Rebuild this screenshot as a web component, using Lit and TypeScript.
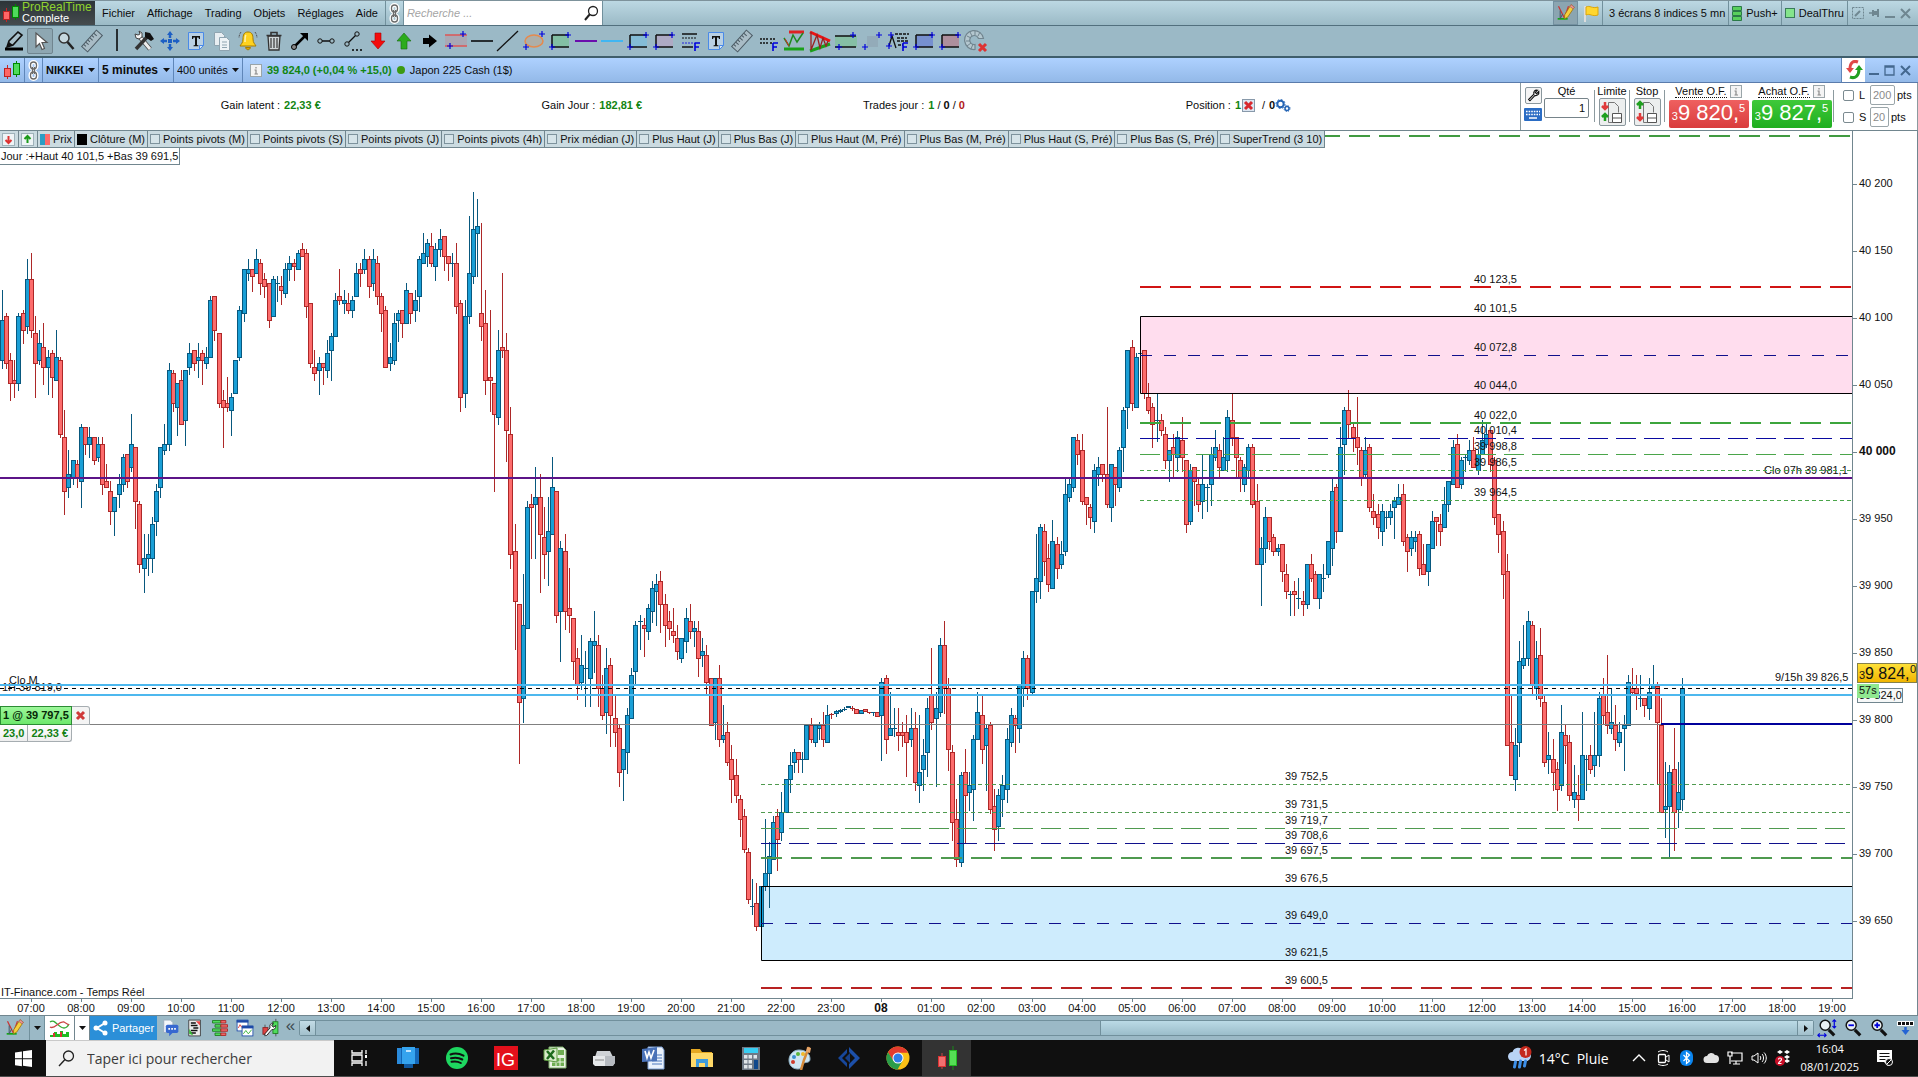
import { LitElement, html, svg, css, nothing } from "lit";
import { customElement } from "lit/decorators.js";

/* ---------- candle data ---------- */

interface Segment {
  x0: number;
  kx: number;
  y0: number;
  rows: string;
}

interface Candle {
  x: number;
  up: boolean;
  top: number;
  bottom: number;
  high: number;
  low: number;
}

// Each entry: position, direction (u/d), then body top, body bottom, high, low in thirds of a unit.
const SEGMENTS: Segment[] = [
  {
    x0: 0, kx: 2.45, y0: 160,
    rows: `5u481,601,390,624 15d469,610,459,624 25d601,670,580,722 37d661,670,601,713 47u469,670,459,692
57d460,511,450,551 67u358,499,297,521 77d358,511,279,531 87d520,610,468,713 98u550,601,510,612
109d562,622,490,672 118u592,622,571,702 128d580,653,571,713 138u592,661,510,661 148d601,823,591,833
160d832,994,751,1064 170u943,983,870,1013 180u902,952,902,974 189d913,952,901,983 199u802,964,792,1043
210d802,853,802,884 221u832,853,801,893 231d832,902,832,914 241u853,892,831,904 251d853,973,831,1003
260d964,983,913,983 270d994,1055,964,1094 282u1012,1054,1012,1125 293u973,1003,943,1043 302u892,973,882,994
312d883,964,883,983 321u853,922,762,933 332d862,1024,862,1104 344d1033,1213,1023,1236 354u1195,1225,1122,1296
364u1184,1195,1122,1245 373u1093,1195,1072,1236 383u994,1084,973,1125 395u862,983,862,1013 405u853,871,793,884
415u631,853,610,872 425d640,731,631,753 435u670,742,670,825 445d661,793,631,793 457u631,781,631,855
466u580,622,549,642 476d571,610,571,632 486u592,601,549,653 496d580,601,571,672 506u592,610,562,624
517u421,592,408,592 527d409,511,409,541 538d520,731,520,742 547d721,742,691,863 557d731,742,652,753
567u712,751,700,825 580u601,700,601,700 589u451,592,438,602 599u328,460,328,483 608u328,340,298,360
618d328,349,328,393 628u298,340,267,340 641d310,370,298,402 650d358,379,340,411 660d370,481,370,501
670u358,469,348,469 681u370,370,348,423 690d379,391,349,432 702u328,400,310,411 711u310,328,288,360
721d310,319,297,360 731u280,328,270,328 741d268,289,249,289 751d280,439,267,471 763d430,610,430,622
773d622,640,571,661 783u610,631,592,702 792d610,622,610,672 802u580,631,541,653 811u529,571,520,662
824u421,529,399,529 834d409,421,328,432 844u421,430,391,460 854d430,451,400,460 863u421,451,409,471
873u340,409,310,409 885d328,340,310,379 895u298,328,267,340 905d298,379,289,411 915u298,370,267,392
925d310,409,289,432 935d409,460,400,513 947d451,622,439,622 956u592,610,549,632 966u490,601,460,613
976u460,481,450,544 986d451,490,451,531 995u391,490,370,490 1008d400,460,400,490 1018u421,451,391,483
1028u298,409,289,453 1037u280,310,219,310 1047u249,289,238,319 1057d259,310,220,319 1069u268,319,249,360
1079u238,268,207,289 1089d229,289,229,330 1099d289,310,289,360 1108u310,310,280,349 1118d310,439,249,461
1131d430,712,421,753 1140u469,700,420,742 1150u340,469,168,491 1160u208,349,96,371 1170u199,220,118,349
1182d460,499,190,542 1192d490,661,391,702 1202d652,661,450,753 1211d670,763,670,995 1221u571,772,510,794
1231d562,571,339,592 1243d571,811,519,903 1253d823,1183,742,1225 1263d1174,1325,1093,1467 1273d1333,1627,1333,1809
1283u1396,1615,1242,1688 1292u1042,1405,1024,1405 1304d1033,1042,1003,1195 1314u1012,1033,922,1195 1324d1012,1123,942,1296
1333d1132,1183,1042,1256 1344u1114,1174,1012,1275 1354u982,1123,891,1123 1366d994,1366,994,1386 1375u1165,1354,1143,1505
1386d1174,1354,1123,1407 1395d1345,1366,1224,1416 1405d1375,1504,1375,1557 1415d1495,1573,1464,1617 1427u1516,1567,1425,1587
1437u1525,1525,1473,1638 1446u1444,1555,1434,1638 1456u1444,1456,1353,1536 1466d1456,1585,1425,1638 1476d1585,1666,1546,1677
1488u1525,1657,1464,1719 1498d1516,1666,1495,1758 1508d1675,1717,1605,1758 1517d1705,1837,1695,1878 1527u1768,1828,1768,1920
1537u1666,1777,1645,1839 1549u1546,1675,1525,1675 1559u1396,1534,1384,1569`,
  },
  {
    x0: 600, kx: 2.45, y0: 560,
    rows: `99u184,184,165,267 109d196,205,175,288 119u145,214,133,237 128u85,154,63,186 140u73,94,42,196
151d64,133,33,216 160d133,196,102,258 170d184,205,153,237 180d214,226,145,246 190d235,274,196,297
202u235,295,235,306 211u175,244,145,276 221d184,214,132,235 231u205,214,183,259 241d214,295,183,348
251u274,286,235,318 263d286,367,255,399 273d355,496,355,496 283u355,487,355,538 293d355,538,315,558
302u526,538,435,548 312d517,607,487,617 324d598,658,556,728 334d646,706,598,728 344d718,778,706,830
354d769,868,748,878 364d877,1018,866,1031 374u1039,1039,957,1062 385d1030,1099,969,1110 396u979,1099,979,1099
405u940,979,777,990 415u889,940,846,1041 425u787,898,768,898 437d769,838,747,930 446u757,817,696,840
457u658,757,658,757 466u616,658,577,698 476u577,607,567,638 486d577,598,577,638 498u598,598,577,638
508u496,598,496,598 518d496,538,474,548 528u496,547,496,558 537u496,505,487,538 547d496,538,456,558
560u466,547,435,547 569d463,463,460,474 579u454,460,450,468 589u451,454,448,456 599u447,447,441,450
608u439,443,439,443 620d445,445,438,450 630d448,460,448,460 640u451,460,451,460 651d448,454,448,454
660d457,457,457,460 670u457,457,457,465 682d457,469,457,469 691u367,466,355,600 702d355,538,346,579
711u505,526,396,526 722u505,505,444,528 732d517,526,444,570 743d517,526,487,558 753d517,547,465,648
763u505,538,444,558 773d505,667,456,690 783u637,676,465,728 792u586,628,537,690 805u445,577,415,648
814d406,487,265,508 825u445,475,396,678 834u256,457,235,468 844d256,385,184,459 854d385,568,355,630
866d577,787,556,840 876d778,898,717,920 885u646,907,637,920 895d637,706,567,850 905u676,697,637,750
915u538,688,525,780 927u457,538,396,538 937d466,568,406,609 947u505,556,496,690 957d496,748,487,760
966d739,808,688,870 976u706,799,688,840 988u676,718,645,770 998u538,688,505,728 1008u466,547,445,558
1018d475,496,465,578 1028u376,505,376,548 1038u295,385,273,438 1049d295,385,285,417 1059u94,397,94,405`,
  },
  {
    x0: 900, kx: 2.3758, y0: 320,
    rows: `323u775,814,642,846 334u622,784,613,836 343d634,724,613,766 353d715,793,673,815 364u664,805,602,805
374d673,745,653,776 384u703,733,664,745 393u523,694,474,705 403u493,532,474,545 412u352,502,352,515
424d361,403,342,432 434d391,544,342,554 443d532,553,532,614 452d562,592,553,624 462u451,604,432,636
473u442,463,411,495 483d433,463,433,483 492d463,553,261,563 503u433,562,433,605 512d442,493,442,555
521u391,502,382,514 533u271,382,261,453 543u91,262,91,324 552d82,250,60,271 562u112,262,100,262
571u100,100,90,112 580d91,220,91,234 592d232,271,190,281 602d262,313,250,383 612u301,301,221,363
621d301,331,283,345 631d343,421,322,444 641u391,421,391,485 652d382,403,342,474 661u352,412,333,453
671d361,412,291,453 681d421,613,421,636 690u451,604,432,614 700d442,484,442,555 711d493,553,474,575
721u493,544,403,594 731u502,502,493,575 740u403,493,382,555 749u382,412,331,422 759d391,442,373,474
770u412,451,352,451 780u292,421,271,453 790d301,352,221,375 799d352,412,352,474 809d421,472,412,515
818u442,493,433,515 830u382,451,373,474 840d382,553,373,563 849d544,733,493,733 859u685,733,652,855
868u592,685,562,726 879d592,664,592,687 889d652,694,643,706 899u685,694,673,706 908d673,754,673,785
918d763,814,733,836 928u823,823,814,887 937d814,823,783,887 949u835,835,774,866 958d844,853,814,887
968u733,853,733,866 977d733,775,703,785 987d763,835,753,835 997u763,835,763,866 1008u775,775,733,815
1018u664,763,664,773 1027u514,685,474,735 1037d502,634,493,666 1046u382,634,322,634 1056u271,373,261,463
1068d271,313,210,355 1077d322,352,312,393 1087d352,382,232,434 1096d391,472,382,495 1106u391,463,352,474
1115d382,562,373,575 1127d574,592,523,614 1137d583,622,552,655 1146u574,634,553,675 1156u592,592,574,625
1165u574,592,553,614 1177u544,562,532,655 1187u532,553,493,553 1196d523,664,493,675 1206d652,694,643,755
1216u652,685,634,706 1225u652,664,634,694 1237d643,745,634,765 1246d733,763,673,763 1256u673,754,673,795
1266u604,685,574,685 1275d592,604,592,675 1284d613,634,583,675 1296u553,622,502,622 1306u484,553,484,574
1315u382,493,360,493 1324d373,502,342,502 1334u421,493,411,504 1344u411,411,403,453 1355u391,421,360,432
1365d391,442,351,442 1374u403,451,391,463 1384u361,403,300,403 1393u343,373,310,383 1403d331,433,331,453
1415d421,592,412,614 1425d583,643,583,696 1434d634,763,604,836 1443d754,1277,703,1277`,
  },
  {
    x0: 1400, kx: 3, y0: 640,
    rows: `334d307,406,165,406 347u316,418,264,450 361u64,307,3,348 373u55,76,-45,85 385u-56,55,-87,76
398d-44,133,-57,163 409u55,145,3,177 421d46,175,-36,198 436d187,367,165,378 448u346,358,276,399
460d358,397,297,450 472d388,448,367,510 485u277,436,195,450 496d286,316,255,369 511d307,466,285,480
523u457,478,375,501 535d466,478,405,540 547u346,478,216,478 560u358,358,346,450 571d346,388,315,399
586u346,376,216,408 598u175,346,156,378 610d165,226,114,250 622d217,256,45,279 635u247,265,145,279
647d256,298,195,330 661u277,307,246,318 673u256,265,225,390 685u127,256,105,256 697d145,157,84,165
709d145,160,105,207 721u175,175,105,198 736d175,196,175,228 748u157,205,114,237 760u133,145,75,145
772d139,247,127,430 784d256,517,174,517 796u499,508,366,591 811u397,499,375,651 823d388,517,264,630
835u457,508,366,561 847u145,478,114,510`,
  },
];

const LAST_X = 1682.4;
const STEP = 4.169;

const CANDLES: Candle[] = SEGMENTS.flatMap((s) =>
  s.rows.split(/\s+/).map((row) => {
    const m = /^(\d+)([ud])(.+)$/.exec(row)!;
    const [top, bottom, high, low] = m[3].split(",").map((v) => Math.floor(s.y0 + Number(v) / 3));
    const slot = Math.round((s.x0 + Number(m[1]) / s.kx - LAST_X) / STEP);
    return { x: Math.floor(LAST_X + slot * STEP), up: m[2] === "u", top, bottom, high, low };
  })
);

/* ---------- chart annotations ---------- */

const RIGHT = 1853;
const THICK = "21 9";
const LONG = "20 8";
const MID = "12 12";
const DOT = "4 3";

interface Level {
  y: number;
  x: number;
  color: string;
  w: number;
  dash?: string;
}

const LEVELS: Level[] = [
  { y: 136, x: 1319, color: "#419b41", w: 2, dash: THICK },
  { y: 287, x: 1140, color: "#d11414", w: 2, dash: THICK },
  { y: 355.5, x: 1140, color: "#10108c", w: 1, dash: MID },
  { y: 423, x: 1140, color: "#3ca53c", w: 2, dash: THICK },
  { y: 438.5, x: 1140, color: "#0a0aa0", w: 1, dash: LONG },
  { y: 454.5, x: 1140, color: "#4aa54a", w: 1, dash: LONG },
  { y: 470.5, x: 1140, color: "#4aa54a", w: 1, dash: DOT },
  { y: 500.5, x: 1140, color: "#4aa54a", w: 1, dash: DOT },
  { y: 784.5, x: 761, color: "#4f9a4f", w: 1, dash: DOT },
  { y: 812.5, x: 761, color: "#4f9a4f", w: 1, dash: DOT },
  { y: 828.5, x: 761, color: "#4f9a4f", w: 1, dash: LONG },
  { y: 843.5, x: 761, color: "#10108c", w: 1, dash: LONG },
  { y: 858, x: 761, color: "#4f9a4f", w: 2, dash: THICK },
  { y: 923.5, x: 761, color: "#10108c", w: 1, dash: MID },
  { y: 988, x: 761, color: "#b82222", w: 2, dash: THICK },
  { y: 724.5, x: 0, color: "#808080", w: 1 },
  { y: 724, x: 1661, color: "#00009b", w: 2 },
  { y: 478, x: 0, color: "#5c1488", w: 2 },
  { y: 688.5, x: 0, color: "#000", w: 1, dash: "4 4" },
  { y: 685, x: 0, color: "#4db8ee", w: 2 },
  { y: 695, x: 0, color: "#4db8ee", w: 2 },
];

const TEXTS: [number, number, string][] = [
  [1474, 283, "40 123,5"], [1474, 312, "40 101,5"], [1474, 351, "40 072,8"],
  [1474, 389, "40 044,0"], [1474, 419, "40 022,0"], [1474, 434, "40 010,4"],
  [1474, 450, "39 998,8"], [1474, 466, "39 986,5"], [1474, 496, "39 964,5"],
  [1285, 780, "39 752,5"], [1285, 808, "39 731,5"], [1285, 824, "39 719,7"],
  [1285, 839, "39 708,6"], [1285, 854, "39 697,5"], [1285, 882, "39 676,5"],
  [1285, 919, "39 649,0"], [1285, 956, "39 621,5"], [1285, 984, "39 600,5"],
  [1764, 474, "Clo 07h 39 981,1"], [1775, 681, "9/15h 39 826,5"],
  [9, 684, "Clo M"], [2, 691, "1H 39 819,0"], [1, 996, "IT-Finance.com - Temps Réel"],
];

const PRICES = Array.from({ length: 12 }, (_, i) => 40200 - i * 50);
const priceY = (p: number) => Math.round(318 + (40100 - p) * 1.34);
const fmt = (p: number) => `${Math.floor(p / 1000)} ${String(p % 1000).padStart(3, "0")}`;
const HOURS = Array.from({ length: 37 }, (_, i) => (i + 7) % 24);

/* ---------- icons ---------- */

const plus = (x: number, y: number) => svg`<path d="M${x - 3} ${y}h6M${x} ${y - 3}v6" stroke="#00d" stroke-width="1.2" fill="none"/>`;
const ic = (body: unknown, w = 24, h = 24, box = "0 0 24 24") =>
  html`<svg width=${w} height=${h} viewBox=${box} fill="none" aria-hidden="true">${body}</svg>`;

const rectTool = (fill: string) => svg`<path d="M4 6h17v12H4z" fill=${fill}/><path d="M4 18h17M4 6h17M4 6v12" stroke="#111" stroke-width="1.5"/>${plus(4, 18)}${plus(20, 6)}`;
const textTool = svg`<path d="M4.500 3.500h15v13l-4 4h-11z" stroke="#4a8ae8" fill="#b9d0e4"/><path d="M15.500 20.500v-4h4z" fill="#dbe9f7" stroke="#4a8ae8"/><path d="M8 7h8v3h-1l-.5-1.500H13V16l1.500.5v.8h-5v-.8L11 16V8.500H9.500L9 10H8z" fill="#111"/>`;
const ruler = svg`<g transform="rotate(-48 12 12)"><rect x="1" y="8" width="22" height="8" fill="#a9bcc6" stroke="#4b5a64"/><path d="M4 8v3M7 8v4M10 8v3M13 8v4M16 8v3M19 8v4" stroke="#4b5a64"/></g>`;
const fLetter = (x: number, y: number) => svg`<path d="M${x} ${y}v8M${x} ${y}h5M${x} ${y + 4}h4" stroke="#00d" stroke-width="1.6"/>`;
const chain = svg`<g stroke="#fff" stroke-width="4"><rect x="3.500" y="3" width="6" height="7" rx="3"/><rect x="3.500" y="13" width="6" height="7" rx="3"/><path d="M6.500 8v7"/></g><g stroke="#6a6a6a" stroke-width="1.300"><rect x="3.500" y="3" width="6" height="7" rx="3"/><rect x="3.500" y="13" width="6" height="7" rx="3"/><path d="M5.500 8v7M7.500 8v7"/></g>`;
const candles = svg`<path d="M4.500 5v14" stroke="#c22"/><rect x="1.500" y="8.500" width="6" height="8" fill="#f66" stroke="#b22"/><path d="M13.500 1v16" stroke="#080"/><rect x="10.500" y="3.500" width="6" height="11" fill="#4fdc5c" stroke="#080"/>`;
const pencilChart = svg`<path d="M3 4l7 14 5-14" stroke="#c33" stroke-width="1.500"/><path d="M2 19h12" stroke="#1a1" stroke-width="2"/><path d="M5 9v10l3-6" stroke="#456" stroke-width="1.200"/><path d="M18 2l4 3-8 12-4 2 .5-5z" fill="#f6cf3c" stroke="#9a7412"/><path d="M18 2l4 3-1.500 2-4-3z" fill="#e99" stroke="#a66"/>`;
const cross = svg`<rect x=".5" y=".5" width="12" height="12" fill="#dce6f2" stroke="#89a"/><path d="M3 3l7 7M10 3l-7 7" stroke="#d8282e" stroke-width="3"/>`;
const wrench = svg`<path d="M3 13l6-6c-1-3 1-5 4-4.500l-2.500 2.500 1.500 1.500 2.500-2.500c.5 3-1.500 5-4.500 4.500l-5.500 6z" stroke="#111" stroke-width="1.300" fill="#fff"/>`;

const TOOLS: { label: string; icon: unknown; on?: boolean }[] = [
  { label: "Dessiner", icon: svg`<path d="M3 20h18" stroke="#000" stroke-width="3"/><path d="M5 18l2-6L16 3l4 3-9 10z" stroke="#111" stroke-width="1.600" fill="#a9c0ca"/><path d="M5 18l2-5 4 3z" fill="#111"/>` },
  { label: "Sélection", on: true, icon: svg`<path d="M8 4v14l3.500-3.500 2.500 6 2.500-1-2.500-6h5z" fill="#fff" stroke="#555" stroke-width="1.200"/>` },
  { label: "Zoom", icon: svg`<circle cx="10" cy="9" r="5" fill="#c6d8df" stroke="#333" stroke-width="1.500"/><path d="M13.500 13l6 7" stroke="#222" stroke-width="2.500"/>` },
  { label: "Règle", icon: ruler },
  { label: "", icon: svg`<path d="M12 1v22" stroke="#000" stroke-width="1.500"/>` },
  { label: "Outils", icon: svg`<path d="M7 7l11 13" stroke="#444" stroke-width="4.500"/><path d="M7 7l11 13" stroke="#eee" stroke-width="3"/><path d="M4 20L16 7" stroke="#333" stroke-width="3.500"/><path d="M13 3l5 1 4 6-3 2-6-4z" fill="#111"/><path d="M3 5l3 1 2-1-1-3 3 2v4L7 10 4 9z" fill="#f4f4f4" stroke="#444"/>` },
  { label: "Déplacer", icon: svg`<path d="M12 2l3 4h-6zM12 22l3-4h-6zM2 12l4-3v6zM22 12l-4-3v6z" fill="#1d5fc4"/><path d="M12 6v3M12 15v3M6 12h3M15 12h3" stroke="#1d5fc4" stroke-width="2.500"/><rect x="10" y="10" width="4" height="4" fill="#1d5fc4"/>` },
  { label: "Texte", icon: textTool },
  { label: "Copier", icon: svg`<path d="M4.500 3.500h7l3 3v10h-10z" fill="#e8eef2" stroke="#8fa4b0"/><path d="M9.500 8.500h7l3 3v10h-10z" fill="#eef3f6" stroke="#8fa4b0"/><path d="M12 13h5M12 16h5M12 18.500h5" stroke="#8fa4b0"/>` },
  { label: "Alerte", icon: svg`<path d="M12 3c4 0 5 3 5 7 0 4 2 5 3 7H4c1-2 3-3 3-7 0-4 1-7 5-7z" fill="#ffd21f" stroke="#a67c00"/><path d="M9.500 18.500c1 3 4 3 5 0z" fill="#e0a800" stroke="#a67c00"/><path d="M5 3c-1.500 2-2 4-2 6M19 3c1.500 2 2 4 2 6" stroke="#555" stroke-dasharray="2 1"/><path d="M10 6c-1 1-1 4-1 7" stroke="#fff3b0" stroke-width="1.500"/>` },
  { label: "Supprimer", icon: svg`<path d="M6 7h12l-1 14H7z" fill="#cfd6d8" stroke="#333" stroke-width="1.300"/><path d="M9 9v10M12 9v10M15 9v10" stroke="#444" stroke-width="1.300"/><path d="M4.500 6.500h15M9 6V3.500h6V6" stroke="#333" stroke-width="1.600"/>` },
  { label: "Flèche", icon: svg`<path d="M5 19L18 6" stroke="#000" stroke-width="2.500"/><path d="M12 4h8v8z" fill="#000"/><circle cx="6" cy="18" r="2.500" fill="#888" stroke="#000"/>` },
  { label: "Segment", icon: svg`<path d="M7 12h10" stroke="#111" stroke-width="1.500"/><circle cx="6" cy="12" r="2.200" fill="#9db9c4" stroke="#111"/><circle cx="18" cy="12" r="2.200" fill="#9db9c4" stroke="#111"/>` },
  { label: "Segments", icon: svg`<path d="M8 14l8-8" stroke="#111" stroke-width="1.300"/><circle cx="7" cy="15" r="2.200" fill="#9db9c4" stroke="#111"/><circle cx="17" cy="5" r="2.200" fill="#9db9c4" stroke="#111"/><path d="M12 21h10" stroke="#000" stroke-width="1.500" stroke-dasharray="2 2"/>` },
  { label: "Flèche baissière", icon: svg`<path d="M9 4h6v8h4l-7 8-7-8h4z" fill="#f40c0c" stroke="#a00" stroke-width=".6"/>` },
  { label: "Flèche haussière", icon: svg`<path d="M9 20h6v-8h4l-7-8-7 8h4z" fill="#2cab1d" stroke="#176a0e" stroke-width=".6"/>` },
  { label: "Flèche droite", icon: svg`<path d="M5 9h6V5.500L19 12l-8 6.500V15H5z" fill="#000"/>` },
  { label: "Canal", icon: svg`<path d="M1 6h22v11H1z" fill="#a9a8b4"/><path d="M1 6h22M1 17h22" stroke="#d55" stroke-width="1.500"/>${plus(6, 17)}${plus(19, 5)}` },
  { label: "Ligne horizontale", icon: svg`<path d="M1 12h22" stroke="#000" stroke-width="1.500"/>` },
  { label: "Droite", icon: svg`<path d="M1 22L22 2" stroke="#111" stroke-width="1.300"/>` },
  { label: "Ellipse", icon: svg`<ellipse cx="12" cy="12" rx="9" ry="6" fill="#adafa9" stroke="#e58a4e" stroke-width="1.500"/>${plus(4, 18)}${plus(20, 5)}` },
  { label: "Rectangle vert", icon: rectTool("#83bfa4") },
  { label: "Ligne violette", icon: svg`<path d="M1 12h22" stroke="#6a0dad" stroke-width="2"/>` },
  { label: "Ligne bleue", icon: svg`<path d="M1 12h22" stroke="#40b6f2" stroke-width="2"/>` },
  { label: "Rectangle bleu", icon: rectTool("#84bcd6") },
  { label: "Rectangle mauve", icon: rectTool("#aeaac4") },
  { label: "Fibonacci", icon: svg`<path d="M4 5h15M4 18h11" stroke="#111" stroke-width="1.500"/><path d="M4 9h15" stroke="#111" stroke-dasharray="2 1"/><path d="M4 14h13" stroke="#22d" stroke-dasharray="2 1"/>${fLetter(17, 14)}` },
  { label: "Texte", icon: textTool },
  { label: "Règle", icon: ruler },
  { label: "Projection", icon: svg`<path d="M4 10h9M4 14h9" stroke="#111" stroke-width="1.300" stroke-dasharray="2 1"/><path d="M14 10h5M14 14h3" stroke="#111" stroke-width="1.300" stroke-dasharray="2 1"/>${fLetter(17, 14)}` },
  { label: "Zigzag", icon: svg`<path d="M7 3h15" stroke="#d22" stroke-width="3"/><path d="M2 20h20" stroke="#1aa01a" stroke-width="3"/><path d="M2 9l5 8 4-11 4 7 6-9" stroke="#1f8a1f" stroke-width="1.500"/><path d="M3 10l4 7" stroke="#d22"/>` },
  { label: "Triangle", icon: svg`<path d="M2 3l20 9" stroke="#e11" stroke-width="3"/><path d="M2 22l20-7" stroke="#1aa01a" stroke-width="3"/><path d="M3 3v18L9 6l3 13 3-10 3 8 2-5" stroke="#922" stroke-width="1.300"/>` },
  { label: "Bande", icon: svg`<path d="M1 7h22v11H1z" fill="#86bfa5"/><path d="M1 7h21M1 18h21" stroke="#111" stroke-width="1.500"/>${plus(5, 18)}${plus(19, 6)}` },
  { label: "Zone", icon: svg`<path d="M7 7h11v11H7z" fill="#93abb9"/>${plus(5, 18)}${plus(19, 6)}` },
  { label: "Retracement", icon: svg`<path d="M3 17L6 7l4 12" stroke="#111" stroke-width="1.300"/><path d="M9 5h14M11 9h10M11 12h12M12 16h5" stroke="#111" stroke-width="1.300" stroke-dasharray="3 1"/>${plus(3, 17)}${plus(5, 6)}${fLetter(17, 14)}` },
  { label: "Rectangle indigo", icon: rectTool("#7790cf") },
  { label: "Rectangle rouge", icon: rectTool("#ae8f9d") },
  { label: "Désactiver l'aimant", icon: svg`<path d="M11 20.500A9.500 9.500 0 1 1 19.500 9.500h-5A4.500 4.500 0 1 0 11 15.500z" fill="#b4c7cf" stroke="#71858f" stroke-width="1.200"/><path d="M3 7l4 2M6 3l2 4M11 2v4M16 3l-2 4M2 12h4M3 17l4-3M7 20l2-5" stroke="#71858f"/><path d="M15 15l7 7M22 15l-7 7" stroke="#d33" stroke-width="3"/>` },
];

const INDICATORS = [
  "Points pivots (M)", "Points pivots (S)", "Points pivots (J)", "Points pivots (4h)", "Prix médian (J)",
  "Plus Haut (J)", "Plus Bas (J)", "Plus Haut (M, Pré)", "Plus Bas (M, Pré)", "Plus Haut (S, Pré)",
  "Plus Bas (S, Pré)", "SuperTrend (3 10)",
];

const APPS: { label: string; icon: unknown; on?: boolean }[] = [
  { label: "Affichage des tâches", icon: svg`<path d="M5 4v3h10V4M5 20v-3h10v3M5 9h10v6H5zM19 4v4M19 15v5" stroke="#fff" stroke-width="1.300"/><path d="M18 9h2v3h-2z" fill="#fff"/>` },
  { label: "Téléphone", icon: svg`<path d="M1 2h22v16H1z" fill="#1467b8"/><path d="M1 2h4v16H1z" fill="#2a8bdc"/><path d="M6 1h13v17H6z" fill="#35a3ee"/><path d="M10 5h5" stroke="#bfe4ff" stroke-width="2"/><path d="M8 18h9v4H8z" fill="#0f579f"/>` },
  { label: "Spotify", icon: svg`<circle cx="12" cy="12" r="11" fill="#1ed760"/><path d="M5.500 8.500c4-1.500 9-1 13 1.200M6 12.300c4-1.200 8-.6 11.300 1.200M6.500 15.800c3.500-.8 6.500-.4 9.300 1.200" stroke="#111" stroke-width="2" stroke-linecap="round"/>` },
  { label: "IG", icon: svg`<path d="M0 0h24v24H0z" fill="#e3101b"/><text x="2" y="20" font-size="18" font-family="Liberation Sans" fill="#fff">IG</text>` },
  { label: "Excel", icon: svg`<path d="M6 1h14l3 3v18H6z" fill="#e9f3e3" stroke="#7fae6d"/><path d="M9 12h12v8H9zM15 4h6v5h-6z" fill="#6fae52"/><path d="M9 16h12M13 12v8M17 12v8" stroke="#e9f3e3"/><path d="M1 4l13-2v14L1 14z" fill="#d7ebc9" stroke="#5a9a3e"/><path d="M4 5l7 8M11 4.500L4 13" stroke="#1d6b1d" stroke-width="2.500"/>` },
  { label: "Imprimante", icon: svg`<path d="M5 5h13l3 6H3z" fill="#cfd2d6"/><path d="M1 10h22v7l-3 3H3l-2-2z" fill="#e6e8ea"/><path d="M13 10h10v7l-2 3h-8z" fill="#b7bbc1"/><path d="M3 14h9" stroke="#888"/>` },
  { label: "Word", icon: svg`<path d="M7 1h14l2 3v19H7z" fill="#eaf1fb" stroke="#7d9fd2"/><path d="M11 9h10M11 12h10M11 15h10M11 18h10" stroke="#4d78bd"/><path d="M1 3l15-2v14L1 16z" fill="#4a72b8"/><path d="M4 5l2 7 2-6 2 6 3-8" stroke="#fff" stroke-width="1.600"/>` },
  { label: "Explorateur", icon: svg`<path d="M1 3h9l2 3h10v15H1z" fill="#e5a823"/><path d="M1 7h22v14H1z" fill="#ffd968"/><path d="M6 21v-8h12v8h-3v-4h-6v4z" fill="#3f9bdc"/>` },
  { label: "Calculatrice", icon: svg`<path d="M3 1h18v23H3z" fill="#6e7986"/><path d="M5 2h14v5H5z" fill="#38cdf2"/><path d="M5 9h3.500v3.500H5zM9.500 9H13v3.500H9.500zM14.500 9H18v3.500h-3.500zM5 14h3.500v3.500H5zM9.500 14H13v3.500H9.500zM5 19h3.500v3.500H5zM9.500 19H13v3.500H9.500z" fill="#dfe5ea"/><path d="M15 14h4v9h-4z" fill="#10488c"/>` },
  { label: "Paint", icon: svg`<path d="M11 4c6 0 11 3 11 9 0 4-4 3-6 4-3 1-1 6-6 6-6 0-9-4-9-9S5 4 11 4z" fill="#cfe6f3" stroke="#8fb2c6"/><circle cx="6" cy="11" r="2" fill="#3a8fd0"/><circle cx="10" cy="8" r="2" fill="#5bb53c"/><circle cx="15" cy="8" r="2" fill="#f0b92a"/><circle cx="5" cy="16" r="2" fill="#cf3d2e"/><path d="M21 1l-5 13-3 10" stroke="#d58a3a" stroke-width="2.500"/><path d="M19 1l4 1-1 5-4-1z" fill="#e8a66a"/>` },
  { label: "Signal", icon: svg`<path d="M10 3L1 12l9 9v-4l-5-5 5-5z" fill="#17479c"/><path d="M12 1l11 11-11 11v-5l6-6-6-6z" fill="#1c4fa8"/><path d="M8 12l5-5v10z" fill="#163f88"/>` },
  { label: "Chrome", icon: svg`<circle cx="12" cy="12" r="11.500" fill="#fbc116"/><path d="M12 .5A11.500 11.500 0 0 0 2 6.200l5 8.500 5-8H22A11.500 11.500 0 0 0 12 .5z" fill="#e33b2e"/><path d="M2 6.200A11.500 11.500 0 0 0 11.500 23.500l5-8.500H7.500z" fill="#2a9d4a"/><circle cx="12" cy="12" r="5.500" fill="#fff"/><circle cx="12" cy="12" r="4.500" fill="#2f7de9"/>` },
  { label: "ProRealTime", on: true, icon: svg`<path d="M7 7v16" stroke="#c44"/><rect x="3.500" y="10.500" width="7" height="10" fill="#f07070" stroke="#d33"/><path d="M18 0v24" stroke="#1a8a1a"/><rect x="14.500" y="4.500" width="7" height="15" fill="#55e055" stroke="#2b2"/>` },
];

/* ---------- chart ---------- */

@customElement("price-chart")
class PriceChart extends LitElement {
  static styles = css`
    :host { display: block; position: relative; font: 11px "Liberation Sans", Arial, sans-serif; color: #111; background: #fff; }
    .plot { display: block; width: 100%; height: auto; }
    .plot text { font-family: "Liberation Sans", Arial, sans-serif; font-size: 11px; fill: #111; }
    .plot .strong { font-size: 12px; font-weight: bold; }
    .plot .big { font-size: 16px; }
    .middle { text-anchor: middle; }
    .legend { position: absolute; left: 0; top: 0; display: flex; height: 16px; background: #cbdbe1; border-bottom: 1px solid #71868f; }
    .item { display: flex; align-items: center; gap: 3px; padding: 0 2px; border-right: 1px solid #71868f; white-space: nowrap; }
    .item input { appearance: none; width: 10px; height: 10px; margin: 0; border: 1px solid #7e939d; background: #d6e4e9; }
    .arrow { border: 0; border-right: 1px solid #71868f; background: none; padding: 0 3px 0 2px; display: flex; align-items: center; }
    .swatch { width: 10px; height: 11px; background: #000; }
    .duo { background: linear-gradient(90deg, #2d9dc4 50%, #ff6a6a 50%); }
    .day { position: absolute; left: 0; top: 17px; height: 16px; line-height: 16px; padding: 0 1px; background: #fff; border: solid #71868f; border-width: 0 1px 1px 0; }
    .position { position: absolute; left: 0; top: 575px; font-weight: bold; }
    .row { display: flex; }
    .entry { height: 17px; line-height: 17px; padding: 0 2px; border: 1px solid #2b8c33; background: linear-gradient(#9df79a, #6de86c); color: #062806; }
    .close { width: 18px; height: 19px; padding: 0; border: 1px solid #a6adb1; border-left: 0; border-radius: 0 3px 0 0; background: #f4f4f4; display: grid; place-items: center; }
    .cell { height: 16px; line-height: 16px; padding: 0 3px; color: #128012; border: solid #a6adb1; border-width: 0 1px 1px 0; background: linear-gradient(#fff, #eee); }
    .cell:last-child { border-radius: 0 0 3px 0; }
  `;

  private candle(c: Candle) {
    const edge = c.up ? "#08587e" : "#ad2828";
    const fill = c.up ? "#1a9fd6" : "#fd6c6c";
    return svg`<rect x=${c.x} y=${c.high} width="1" height=${c.low - c.high + 1} fill=${edge}/>${
      c.bottom - c.top < 1
        ? svg`<rect x=${c.x - 2} y=${c.top} width="5" height="1" fill=${edge}/>`
        : svg`<rect x=${c.x - 1.5} y=${c.top + 0.5} width="4" height=${c.bottom - c.top} fill=${fill} stroke=${edge}/>`
    }`;
  }

  render() {
    return html`
      <svg class="plot" viewBox="0 131 1918 884" role="img" aria-label="NIKKEI 5 minutes">
        <path d="M1140 316.500H${RIGHT}V393.500H1140z" fill="#ffddee" />
        <path d="M761 886.500H${RIGHT}V960.500H761z" fill="#ceecfd" />
        <g shape-rendering="crispEdges">${CANDLES.map((c) => this.candle(c))}</g>
        <path d="M${RIGHT} 316.500H1140.500V393.500H${RIGHT}M${RIGHT} 886.500H761.500V960.500H${RIGHT}" fill="none" stroke="#000" />
        ${TEXTS.map(([x, y, t]) => svg`<text x=${x} y=${y}>${t}</text>`)}
        ${LEVELS.map((l) => svg`<line x1=${l.x} x2=${RIGHT - 1} y1=${l.y} y2=${l.y} stroke=${l.color} stroke-width=${l.w} stroke-dasharray=${l.dash ?? nothing}/>`)}
        <path d="M1852.500 131V998.500M0 998.500H1853M1917.500 131V1015" stroke="#71868f" fill="none" />
        ${PRICES.map((p) => svg`<path d="M1853 ${priceY(p) + 0.5}h4" stroke="#71868f"/><text class=${p === 40000 ? "strong" : ""} x="1859" y=${priceY(p) + 3}>${fmt(p)}</text>`)}
        ${HOURS.map((h, i) => {
          const x = Math.floor(31.4 + i * 50.03);
          return svg`<path d="M${x + 0.5} 999v3" stroke="#71868f"/><text class=${h === 0 ? "strong middle" : "middle"} x=${x} y="1012">${h === 0 ? "08" : `${String(h).padStart(2, "0")}:00`}</text>`;
        })}
        <defs>
          <linearGradient id="gold" x2="0" y2="1"><stop stop-color="#ffe23a" /><stop offset="1" stop-color="#f0b400" /></linearGradient>
        </defs>
        <rect x="1857.500" y="688.500" width="45" height="14" fill="#f6f8f8" stroke="#71868f" />
        <text x="1859" y="699">39 824,0</text>
        <rect x="1857" y="684" width="22" height="14" fill="#90e890" />
        <text x="1859" y="694">57s</text>
        <rect x="1857.500" y="663.500" width="59" height="19" fill="url(#gold)" stroke="#85804a" />
        <text x="1859" y="679">3</text><text class="big" x="1865" y="679">9 824,</text><text x="1910" y="673">0</text>
      </svg>
      <div class="legend">
        <button class="arrow" aria-label="Descendre">${ic(svg`<rect x=".5" y=".5" width="12" height="12" fill="#eef4f6" stroke="#9fb2ba"/><path d="M6.500 3v7M3.500 7l3 3 3-3" stroke="#d33" stroke-width="2"/>`, 13, 13, "0 0 13 13")}</button>
        <button class="arrow" aria-label="Monter">${ic(svg`<rect x=".5" y=".5" width="12" height="12" fill="#eef4f6" stroke="#9fb2ba"/><path d="M6.500 10V3M3.500 6l3-3 3 3" stroke="#1a9a1a" stroke-width="2"/>`, 13, 13, "0 0 13 13")}</button>
        <span class="item"><span class="swatch duo"></span>Prix</span>
        <span class="item"><span class="swatch"></span>Clôture (M)</span>
        ${INDICATORS.map((t) => html`<label class="item"><input type="checkbox" />${t}</label>`)}
      </div>
      <div class="day">Jour :+Haut 40 101,5 +Bas 39 691,5</div>
      <div class="position">
        <div class="row"><span class="entry">1 @ 39 797,5</span><button class="close" aria-label="Clôturer">${ic(svg`<path d="M2 2l7 7M9 2L2 9" stroke="#d03a3a" stroke-width="3"/>`, 11, 11, "0 0 11 11")}</button></div>
        <div class="row"><span class="cell">23,0</span><span class="cell">22,33 €</span></div>
      </div>
    `;
  }
}

/* ---------- application ---------- */

@customElement("app-root")
class AppRoot extends LitElement {
  static styles = css`
    :host { display: flex; flex-direction: column; min-height: 100vh; overflow: hidden; background: #9bb9c5; color: #0c0c0c; font: 11px "Liberation Sans", Arial, sans-serif; }
    * { box-sizing: border-box; }
    button, input, select { font: inherit; color: inherit; margin: 0; }
    button { border: 0; background: none; padding: 0; display: flex; align-items: center; justify-content: center; }
    svg { flex: none; display: block; }
    .grow { flex: 1; }
    .bar { display: flex; align-items: stretch; }
    .cell { display: flex; align-items: center; border-right: 1px solid #71909c; }

    .title { height: 26px; border-top: 1px solid #7d929b; border-bottom: 1px solid #52707e; background: linear-gradient(#bcd8e3, #9bbac6); }
    .brand { display: flex; align-items: center; gap: 2px; width: 95px; padding-left: 2px; background: linear-gradient(#2c3438, #454b4e); color: #fff; line-height: 11px; }
    .name { color: #8fd32f; font-size: 12px; }
    .menu { display: flex; align-items: center; gap: 12px; padding: 0 7px; border-right: 1px solid #71909c; }
    .menu a { color: inherit; text-decoration: none; }
    .link { width: 18px; justify-content: center; }
    .search { display: flex; align-items: center; width: 199px; padding: 0 2px 0 3px; background: #fff; border-right: 1px solid #71909c; }
    .search input { flex: 1; min-width: 0; border: 0; padding: 0; outline: 0; background: none; font-style: italic; }
    .search input::placeholder { color: #a5a5a5; }
    .pressed { width: 25px; background: #8ba5b1; border: 1px solid #7390a0; }
    .win { display: flex; align-items: center; gap: 5px; padding: 0 7px 0 4px; }

    .tools { height: 32px; padding: 2px 0 0 1px; border-bottom: 2px solid #3f5e6c; background: #9bb9c6; }
    .tool { width: 26px; height: 26px; }
    .tool.on { background: #8ea7b2; border: 1px solid #70858f; border-radius: 2px; }

    .symbol { height: 25px; border-bottom: 1px solid #5a7bab; background: linear-gradient(#aed1ff, #93b9e8); }
    .symbol .cell { border-color: #5f86b8; }
    .pick { gap: 4px; padding: 0 3px; }
    .pick select { appearance: none; border: 0; background: none; padding: 0; }
    .bold select { font-weight: bold; }
    .larger { font-size: 12px; }
    .quote { display: flex; align-items: center; gap: 5px; padding-left: 7px; }
    .gain { color: #128512; font-weight: bold; }
    .loss { color: #b01818; font-weight: bold; }
    .dot { width: 8px; height: 8px; border-radius: 50%; background: #3c9a12; }
    .refresh { width: 24px; background: #fff; border-left: 1px solid #5f86b8; }

    .info { height: 48px; background: #fff; border-bottom: 1px solid #71868f; }
    .stats { flex: 1; display: flex; align-items: center; justify-content: space-evenly; padding: 0 8px 3px 0; }
    .stat { display: flex; align-items: center; gap: 4px; }
    .tight { gap: 0; }
    .order { display: flex; padding: 2px 3px 0; border-left: 1px solid #8c9a9f; border-right: 1px solid #8c9a9f; }
    .col { display: flex; flex-direction: column; align-items: center; gap: 1px; line-height: 12px; }
    .aux { gap: 4px; padding-top: 2px; width: 18px; }
    .key { width: 17px; height: 17px; border: 1px solid #8a979d; border-radius: 2px; background: #f5f5f5; }
    .amount { margin: 0 5px 0 2px; }
    .qty { width: 45px; height: 20px; border: 1px solid #76848a; border-radius: 2px; text-align: right; padding: 0 3px; }
    .mid { width: 34px; }
    .split { width: 1px; height: 32px; margin-top: 5px; background: #8c9a9f; }
    .square { width: 27px; height: 28px; border: 1px solid #8a979d; border-radius: 2px; background: #eceeee; }
    .deals { display: flex; padding-left: 2px; }
    .deal { width: 83px; gap: 2px; }
    .head { display: flex; align-items: center; gap: 3px; height: 13px; }
    .head span { border-bottom: 1px dotted #111; line-height: 11px; }
    .trade { width: 80px; height: 28px; border-radius: 2px; color: #fff; align-items: baseline; line-height: 26px; font-size: 22px; }
    .sell { background: linear-gradient(#ef6060, #d93c3c); }
    .buy { background: linear-gradient(#3fc93a, #1fae1f); }
    .trade small { font-size: 11px; }
    .trade sup { font-size: 11px; line-height: 11px; align-self: flex-start; padding-top: 3px; }
    .guards { display: flex; flex-direction: column; gap: 2px; padding-left: 9px; width: 80px; }
    .guard { display: flex; align-items: center; gap: 2px; height: 20px; }
    .guard label { display: flex; align-items: center; gap: 5px; width: 25px; }
    .guard input[type="checkbox"] { appearance: none; width: 11px; height: 11px; border: 1px solid #7b8a90; border-radius: 2px; background: #fff; }
    .pts { height: 20px; border: 1px solid #9aa5a9; border-radius: 2px; color: #8a8a8a; padding: 0 2px; }
    .w3 { width: 25px; }
    .w2 { width: 19px; }

    .scroll { height: 25px; border-top: 1px solid #71868f; background: #9bb9c6; align-items: center; }
    .scroll > * { height: 100%; }
    .view { width: 30px; }
    .drop { width: 15px; }
    .lit { background: #fff; border-right: 1px solid #71868f; }
    .share { width: 67px; gap: 4px; background: #2b8fd8; color: #fff; }
    .small { width: 25px; }
    .mag { width: 26px; }
    .fold { width: 17px; font-size: 17px; color: #3d4b52; padding-bottom: 4px; }
    .scroll .track { flex: 1; display: flex; height: 16px; border: 1px solid #71909c; border-radius: 2px; }
    .end { width: 15px; background: linear-gradient(#c3dce6, #a2c0cc); }
    .lead { flex: 53; border-left: 1px solid #71909c; }
    .thumb { flex: 47; border: solid #71909c; border-width: 0 1px; background: linear-gradient(#bbdae6, #9bbdca); }

    .task { height: 37px; flex: none; background: #101010; color: #fff; border-bottom: 1px solid #4c4c4c; font-family: "Open Sans", "Noto Sans", sans-serif; }
    .start { width: 46px; }
    .find { display: flex; align-items: center; gap: 12px; width: 288px; padding: 0 12px; background: #f2f2f2; border-top: 1px solid #c9c9c9; }
    .find input { flex: 1; min-width: 0; border: 0; padding: 0; outline: 0; background: none; font-size: 14px; }
    .find input::placeholder { color: #3b3b3b; opacity: 1; }
    .app { width: 49px; }
    .app.on { background: #333; }
    .tray { display: flex; align-items: center; gap: 8px; padding-right: 25px; }
    .weather { display: flex; align-items: center; gap: 7px; font-size: 14px; margin-right: 14px; }
    .clock { text-align: center; line-height: 18px; font-size: 11px; margin: 0 9px 0 2px; }
  `;

  private caret = ic(svg`<path d="M0 0h7l-3.500 4z" fill="#111"/>`, 7, 4, "0 0 7 4");
  private infoIcon = ic(svg`<rect x=".5" y=".5" width="11" height="12" fill="#f4f4f4" stroke="#9aa5a9"/><path d="M6 3v1.500M4.500 6H6v4M4.500 10h3.500" stroke="#888" stroke-width="1.200"/>`, 12, 13, "0 0 12 13");

  private titleBar() {
    return html`<header class="bar title">
      <div class="brand">${ic(candles, 18, 20, "0 0 18 20")}<div><div class="name">ProRealTime</div><div>Complete</div></div></div>
      <nav class="menu">${["Fichier", "Affichage", "Trading", "Objets", "Réglages", "Aide"].map((t) => html`<a href="#">${t}</a>`)}</nav>
      <button class="cell link" aria-label="Lier">${ic(chain, 13, 23, "0 0 13 23")}</button>
      <label class="search"><input type="search" placeholder="Recherche ..." aria-label="Recherche" />${ic(svg`<circle cx="9" cy="6" r="4.500" stroke="#222" stroke-width="1.300"/><path d="M6 9l-5 6" stroke="#222" stroke-width="2"/>`, 16, 16, "0 0 16 16")}</label>
      <span class="grow"></span>
      <button class="pressed" aria-label="Dessin">${ic(pencilChart, 20, 20)}</button>
      <button class="cell small" aria-label="Drapeau">${ic(svg`<path d="M3 2v16" stroke="#ddd" stroke-width="2"/><path d="M4 3c4-2 6 2 12 0v8c-6 2-8-2-12 0z" fill="#ffd62e" stroke="#dba60a"/>`, 17, 18, "0 0 17 18")}</button>
      <span class="cell pick">&nbsp;3 écrans 8 indices 5 mn</span>
      <button class="cell pick">${ic(svg`<path d="M.5.500h9v4h-9zM.500 5.500h9v4h-9zM.500 10.500h9v4h-9z" fill="#58cf5c" stroke="#2b7a48"/>`, 10, 15, "0 0 10 15")}Push+</button>
      <button class="cell pick">${ic(svg`<rect x=".5" y=".5" width="9" height="9" fill="#84e58c" stroke="#3a7c5a"/>`, 10, 10, "0 0 10 10")}DealThru</button>
      <div class="win">
        ${ic(svg`<rect x=".5" y=".5" width="11" height="11" stroke="#6f8791" stroke-dasharray="2 1"/><path d="M3 9l5-5" stroke="#6f8791" stroke-width="2"/>`, 12, 12, "0 0 12 12")}
        ${ic(svg`<path d="M0 5h4" stroke="#6f8791" stroke-width="1.500"/><path d="M3 2h2v1h3V1h2v8H8V7H5v1H3z" fill="#6f8791"/>`, 11, 10, "0 0 11 10")}
        ${ic(svg`<path d="M0 10h10" stroke="#6f8791" stroke-width="2"/>`, 10, 12, "0 0 10 12")}
        ${ic(svg`<path d="M1 1l9 9M10 1l-9 9" stroke="#6f8791" stroke-width="2"/>`, 11, 11, "0 0 11 11")}
      </div>
    </header>`;
  }

  private symbolBar() {
    const pick = (value: string, cls: string) => html`<label class="cell pick ${cls}"><select aria-label=${value}><option>${value}</option></select>${this.caret}</label>`;
    return html`<div class="bar symbol">
      <span class="cell link small">${ic(candles, 18, 20, "0 0 18 20")}</span>
      <button class="cell link" aria-label="Lier">${ic(chain, 13, 23, "0 0 13 23")}</button>
      ${pick("NIKKEI", "bold")}${pick("5 minutes", "bold larger")}${pick("400 unités", "")}
      <div class="quote">${this.infoIcon}<span class="gain">39 824,0 (+0,04 % +15,0)</span><span class="dot"></span><span>Japon 225 Cash (1$)</span></div>
      <span class="grow"></span>
      <button class="refresh" aria-label="Actualiser">${ic(svg`<path d="M13 2C8 0 5 3 5 9" stroke="#e04848" stroke-width="3"/><path d="M1 8h8l-4 5z" fill="#e04848"/><path d="M5 17c5 2 9-1 9-8" stroke="#22a022" stroke-width="3"/><path d="M10 10h8l-4-5z" fill="#22a022"/>`, 18, 20, "0 0 18 20")}</button>
      <div class="win">
        ${ic(svg`<path d="M0 10h10" stroke="#44688f" stroke-width="2"/>`, 10, 12, "0 0 10 12")}
        ${ic(svg`<path d="M1 1h9v9H1zM1 2h9" stroke="#44688f" stroke-width="1.300"/>`, 11, 11, "0 0 11 11")}
        ${ic(svg`<path d="M1 1l9 9M10 1l-9 9" stroke="#44688f" stroke-width="2"/>`, 11, 11, "0 0 11 11")}
      </div>
    </div>`;
  }

  private infoBar() {
    const doc = (down: string, up: string, first: boolean) => svg`<path d="M9.500 3.500h6l4 4v6M9.500 3.500v20M9.500 23.500h5" stroke="#777" transform="translate(-1 -1)"/><path d="M12.500 13.500h9v9h-9zM12.500 18h9" stroke="#555" fill="#fff"/><path d=${first ? "M5 2v7M2 6l3 3 3-3" : "M5 9V2M2 5l3-3 3 3"} stroke=${down} stroke-width="2.500"/><path d=${first ? "M5 21v-7M2 17l3-3 3 3" : "M5 13v7M2 17l3 3 3-3"} stroke=${up} stroke-width="2.500"/>`;
    const guard = (l: string, v: string, w: string) => html`<div class="guard"><label><input type="checkbox" />${l}</label><input class="pts ${w}" .value=${v} aria-label=${`Points ${l}`} />pts</div>`;
    return html`<section class="bar info">
      <div class="stats">
        <span class="stat">Gain latent : <span class="gain">22,33 €</span></span>
        <span class="stat">Gain Jour : <span class="gain">182,81 €</span></span>
        <span class="stat">Trades jour : <span><span class="gain">1</span> / <b>0</b> / <span class="loss">0</span></span></span>
        <span class="stat">Position : <span class="stat tight"><span class="gain">1</span>&#8202;${ic(cross, 13, 13, "0 0 13 13")}</span> &nbsp;/ <span class="stat tight"><b>0</b>${ic(svg`<circle cx="5.500" cy="5" r="3.200" stroke="#2464b4" stroke-width="2"/><circle cx="5.500" cy="5" r="4.500" stroke="#2464b4" stroke-dasharray="1.700 1.800"/><circle cx="12" cy="9.500" r="2" stroke="#2464b4" stroke-width="1.500"/><circle cx="12" cy="9.500" r="3" stroke="#2464b4" stroke-dasharray="1.200 1.200"/>`, 16, 13, "0 0 16 13")}</span></span>
      </div>
      <div class="order">
        <div class="col aux"><button class="key" aria-label="Paramètres">${ic(wrench, 15, 15, "0 0 17 17")}</button><button aria-label="Clavier">${ic(svg`<rect width="18" height="13" rx="1" fill="#2a6cc4"/><path d="M2 3.500h14M2 6.500h14" stroke="#fff" stroke-width="1.700" stroke-dasharray="1.600 1"/><path d="M5 10h8" stroke="#fff" stroke-width="1.500"/>`, 18, 13, "0 0 18 13")}</button></div>
        <label class="col amount">Qté<input class="qty" .value=${"1"} /></label>
        <span class="split"></span>
        <div class="col mid">Limite<button class="square" aria-label="Limite">${ic(doc("#e03a3a", "#1fa01f", true), 24, 24)}</button></div>
        <span class="split"></span>
        <div class="col mid">Stop<button class="square" aria-label="Stop">${ic(doc("#1fa01f", "#e03a3a", false), 24, 24)}</button></div>
        <span class="split"></span>
        <div class="deals">
          <div class="col deal"><div class="head"><span>Vente O.F.</span>${this.infoIcon}</div><button class="trade sell"><small>3</small>9 820,<sup>5</sup></button></div>
          <div class="col deal"><div class="head"><span>Achat O.F.</span>${this.infoIcon}</div><button class="trade buy"><small>3</small>9 827,<sup>5</sup></button></div>
        </div>
        <span class="split"></span>
        <div class="guards">${guard("L", "200", "w3")}${guard("S", "20", "w2")}</div>
      </div>
    </section>`;
  }

  private scrollBar() {
    const mag = (inner: unknown) => svg`<circle cx="8" cy="7" r="5.500" fill="#e9f0f3" stroke="#111" stroke-width="1.600"/><path d="M12 12l6 6" stroke="#111" stroke-width="3.500"/>${inner}`;
    return html`<footer class="bar scroll">
      <button class="cell view" aria-label="Dessin">${ic(pencilChart, 20, 20)}</button>
      <button class="cell drop" aria-label="Options de dessin">${this.caret}</button>
      <button class="lit view" aria-label="Indicateurs">${ic(svg`<path d="M1 4c5-4 8 6 14 6 3 0 4-2 5-4" stroke="#3a3" stroke-width="1.300"/><path d="M1 9c5 3 8-6 14-5l5 3" stroke="#c44" stroke-width="1.300"/><path d="M1 19h19v-5h-3v2h-3v-3h-3v3H8v-2H5v3H1z" fill="#2b2"/><path d="M4 19v-4h2v4M11 19v-5h2v5" fill="#d33"/>`, 21, 20, "0 0 21 20")}</button>
      <button class="lit drop" aria-label="Options d'indicateurs">${this.caret}</button>
      <button class="share">${ic(svg`<path d="M12 3L4 8l8 5" stroke="#fff" stroke-width="2"/><circle cx="12" cy="3" r="2.500" fill="#fff"/><circle cx="3" cy="8" r="2.500" fill="#fff"/><circle cx="12" cy="13" r="2.500" fill="#fff"/>`, 15, 16, "0 0 15 16")}Partager</button>
      ${[
        svg`<path d="M4.500 2.500h8l3 3v12h-11z" fill="#f4f7fa" stroke="#9ab"/><rect x="7" y="8" width="15" height="10" rx="2" fill="#3768d0"/><path d="M11 16v6l6-6z" fill="#3768d0"/><path d="M10 13h9" stroke="#fff" stroke-width="2" stroke-dasharray="2 1.500"/>`,
        svg`<path d="M4.500 2.500h14v19h-14z" fill="#eee" stroke="#333"/><path d="M7 6h6M7 9h8M10 12h6M7 15h8M7 18h6" stroke="#111" stroke-width="1.600"/><path d="M13 4h5v5z" fill="#e44"/><path d="M5 13v6l5 2z" fill="#3b3"/>`,
        svg`<path d="M3 3h10v3H3zM6 8h7v3H6zM3 13h10v3H3zM6 18h7v3H6z" fill="#4fdc5c" stroke="#1a7a1a"/><path d="M13 3h6v3h-6zM13 8h8v3h-8zM13 13h8v3h-8zM13 18h6v3h-6z" fill="#e66" stroke="#a22"/>`,
        svg`<rect x="2.500" y="2.500" width="13" height="13" fill="#fff" stroke="#1d4aa8"/><path d="M2 4h14" stroke="#1d4aa8" stroke-width="3"/><rect x="8.500" y="9.500" width="13" height="12" fill="#fff" stroke="#1d4aa8"/><path d="M8 11h14" stroke="#1d4aa8" stroke-width="3"/><path d="M10 19l3-4 3 4 4-5" stroke="#2a2"/><path d="M4 12l2-4 2 3" stroke="#d33"/>`,
        svg`<path d="M6 8v14M19 1v21" stroke="#444"/><rect x="3.500" y="11.500" width="6" height="8" fill="#d44" stroke="#822"/><rect x="15.500" y="4.500" width="6" height="14" fill="#4fdc5c" stroke="#1a7a1a"/><path d="M5 20l7-8c-1-4 1-6 4-6l-2 3 2 2 3-2c0 4-2 5-5 5l-6 7z" fill="#fff" stroke="#111"/>`,
      ].map((i) => html`<button class="small" aria-label="Outil">${ic(i, 20, 20)}</button>`)}
      <button class="fold" aria-label="Replier">«</button>
      <div class="track">
        <button class="end" aria-label="Gauche">${ic(svg`<path d="M4 0v7L0 3.500z" fill="#111"/>`, 4, 7, "0 0 4 7")}</button>
        <span class="lead"></span><span class="thumb"></span>
        <button class="end" aria-label="Droite">${ic(svg`<path d="M0 0v7l4-3.500z" fill="#111"/>`, 4, 7, "0 0 4 7")}</button>
      </div>
      <button class="mag" aria-label="Ajuster">${ic(mag(svg`<path d="M18 1v9M16 3l2-2 2 2M16 8l2 2 2-2M0 18h9M2 16l-2 2 2 2M7 16l2 2-2 2" stroke="#00d" stroke-width="1.300"/>`), 20, 20, "-1 -1 22 22")}</button>
      <button class="mag" aria-label="Zoom arrière">${ic(mag(svg`<path d="M5 7h6" stroke="#00d" stroke-width="2"/>`), 20, 20, "-1 -1 22 22")}</button>
      <button class="mag" aria-label="Zoom avant">${ic(mag(svg`<path d="M5 7h6M8 4v6" stroke="#00d" stroke-width="2"/>`), 20, 20, "-1 -1 22 22")}</button>
      <button class="mag" aria-label="Panneau">${ic(svg`<rect x="1" y="3" width="17" height="5" fill="#fff"/><path d="M2 5.500h15" stroke="#111" stroke-width="3" stroke-dasharray="3 1"/><path d="M9.500 9v5" stroke="#2464d4" stroke-width="2.500"/><path d="M5.500 12h8l-4 5z" fill="#2464d4"/>`, 19, 20, "0 0 19 20")}</button>
    </footer>`;
  }

  private taskBar() {
    return html`<footer class="bar task">
      <button class="start" aria-label="Démarrer">${ic(svg`<path d="M0 2.300l6.500-1v6.500H0zM7.500 1.200L16 0v7.800H7.500zM0 8.800h6.500v6.500L0 14.300zM7.500 8.800H16V16l-8.500-1.200z" fill="#fff"/>`, 17, 17, "0 0 16 16")}</button>
      <label class="find">${ic(svg`<circle cx="10.500" cy="6" r="5" stroke="#222" stroke-width="1.300"/><path d="M7 9.500L1 16" stroke="#222" stroke-width="1.400"/>`, 17, 17, "0 0 17 17")}<input type="search" placeholder="Taper ici pour rechercher" aria-label="Taper ici pour rechercher" /></label>
      ${APPS.map((a) => html`<button class="app ${a.on ? "on" : ""}" aria-label=${a.label}>${ic(a.icon, 24, 24)}</button>`)}
      <span class="grow"></span>
      <div class="tray">
        <div class="weather">${ic(svg`<path d="M5 15a4.500 4.500 0 0 1 0-9 6 6 0 0 1 11-1 5 5 0 0 1 4 10z" fill="#b9d3f5"/><path d="M8 16l-1 5M13 15l-1 6M18 15l-1 5" stroke="#3d8fe8" stroke-width="3" stroke-linecap="round"/><circle cx="18" cy="6" r="6" fill="#c4281c"/><path d="M16.500 4.500L18.500 3v6.500" stroke="#fff" stroke-width="1.200"/>`, 25, 24, "0 0 24 24")}<span>14°C</span><span>Pluie</span></div>
        ${ic(svg`<path d="M2 11l6-6 6 6" stroke="#fff" stroke-width="1.400"/>`, 16, 16, "0 0 16 16")}
        ${ic(svg`<path d="M3 2c3-2 7-2 10 0M3 14c3 2 7 2 10 0" stroke="#fff"/><rect x="3.500" y="4.500" width="7" height="8" rx="1" stroke="#fff" stroke-width="1.300"/><path d="M11 7l3-2v7l-3-2" stroke="#fff"/>`, 16, 16, "0 0 16 16")}
        ${ic(svg`<rect x="1" width="13" height="16" rx="6" fill="#0a84ee"/><path d="M4.500 5l6 6-3 2.500V2.500l3 2.500-6 6" stroke="#fff" stroke-width="1.200"/>`, 16, 16, "0 0 16 16")}
        ${ic(svg`<path d="M4 13a3.500 3.500 0 0 1 0-7 4.500 4.500 0 0 1 8-1 4 4 0 0 1 0 8z" fill="#e2e2e2"/>`, 16, 16, "0 0 16 16")}
        ${ic(svg`<path d="M4 3h11v8H4M9 11v3M6 14h7M1 2h4v4H1zM3 6v8" stroke="#fff" stroke-width="1.200"/>`, 16, 16, "0 0 16 16")}
        ${ic(svg`<path d="M1 6h2l4-3v10L3 10H1z" stroke="#fff"/><path d="M9 6c1 1 1 3 0 4M11 4c2 2 2 6 0 8M13 2.500c3 3 3 8 0 11" stroke="#fff"/>`, 16, 16, "0 0 16 16")}
        ${ic(svg`<path d="M5 0l3 2-3 2-3-2zM12 0l3 2-3 2-3-2zM12 5l3 2-3 2-3-2zM9 11l3-2 3 2-3 2z" fill="#fff"/><circle cx="5" cy="11" r="5" fill="#c80f28"/><path d="M3.500 9.500c0-2 3-2 3 0 0 1.500-3 2-3 4h3" stroke="#fff" stroke-width="1.200"/>`, 16, 17, "0 0 16 17")}
        <div class="clock"><div>16:04</div><div>08/01/2025</div></div>
        ${ic(svg`<path d="M1 1h15v12h-4v4l-4-4H1z" fill="#fff"/><path d="M3.500 4.500h10M3.500 7.500h10M3.500 10.500h6" stroke="#111"/><circle cx="13" cy="13" r="3.500" fill="#111" stroke="#fff"/><path d="M11 15l4-4" stroke="#fff"/>`, 17, 18, "0 0 17 18")}
      </div>
    </footer>`;
  }

  render() {
    return html`
      ${this.titleBar()}
      <div class="bar tools">${TOOLS.map((t) =>
        t.label
          ? html`<button class="tool ${t.on ? "on" : ""}" aria-label=${t.label}>${ic(t.icon)}</button>`
          : html`<span class="tool">${ic(t.icon)}</span>`
      )}</div>
      ${this.symbolBar()} ${this.infoBar()}
      <price-chart></price-chart>
      ${this.scrollBar()} ${this.taskBar()}
    `;
  }
}

export { PriceChart, AppRoot };
